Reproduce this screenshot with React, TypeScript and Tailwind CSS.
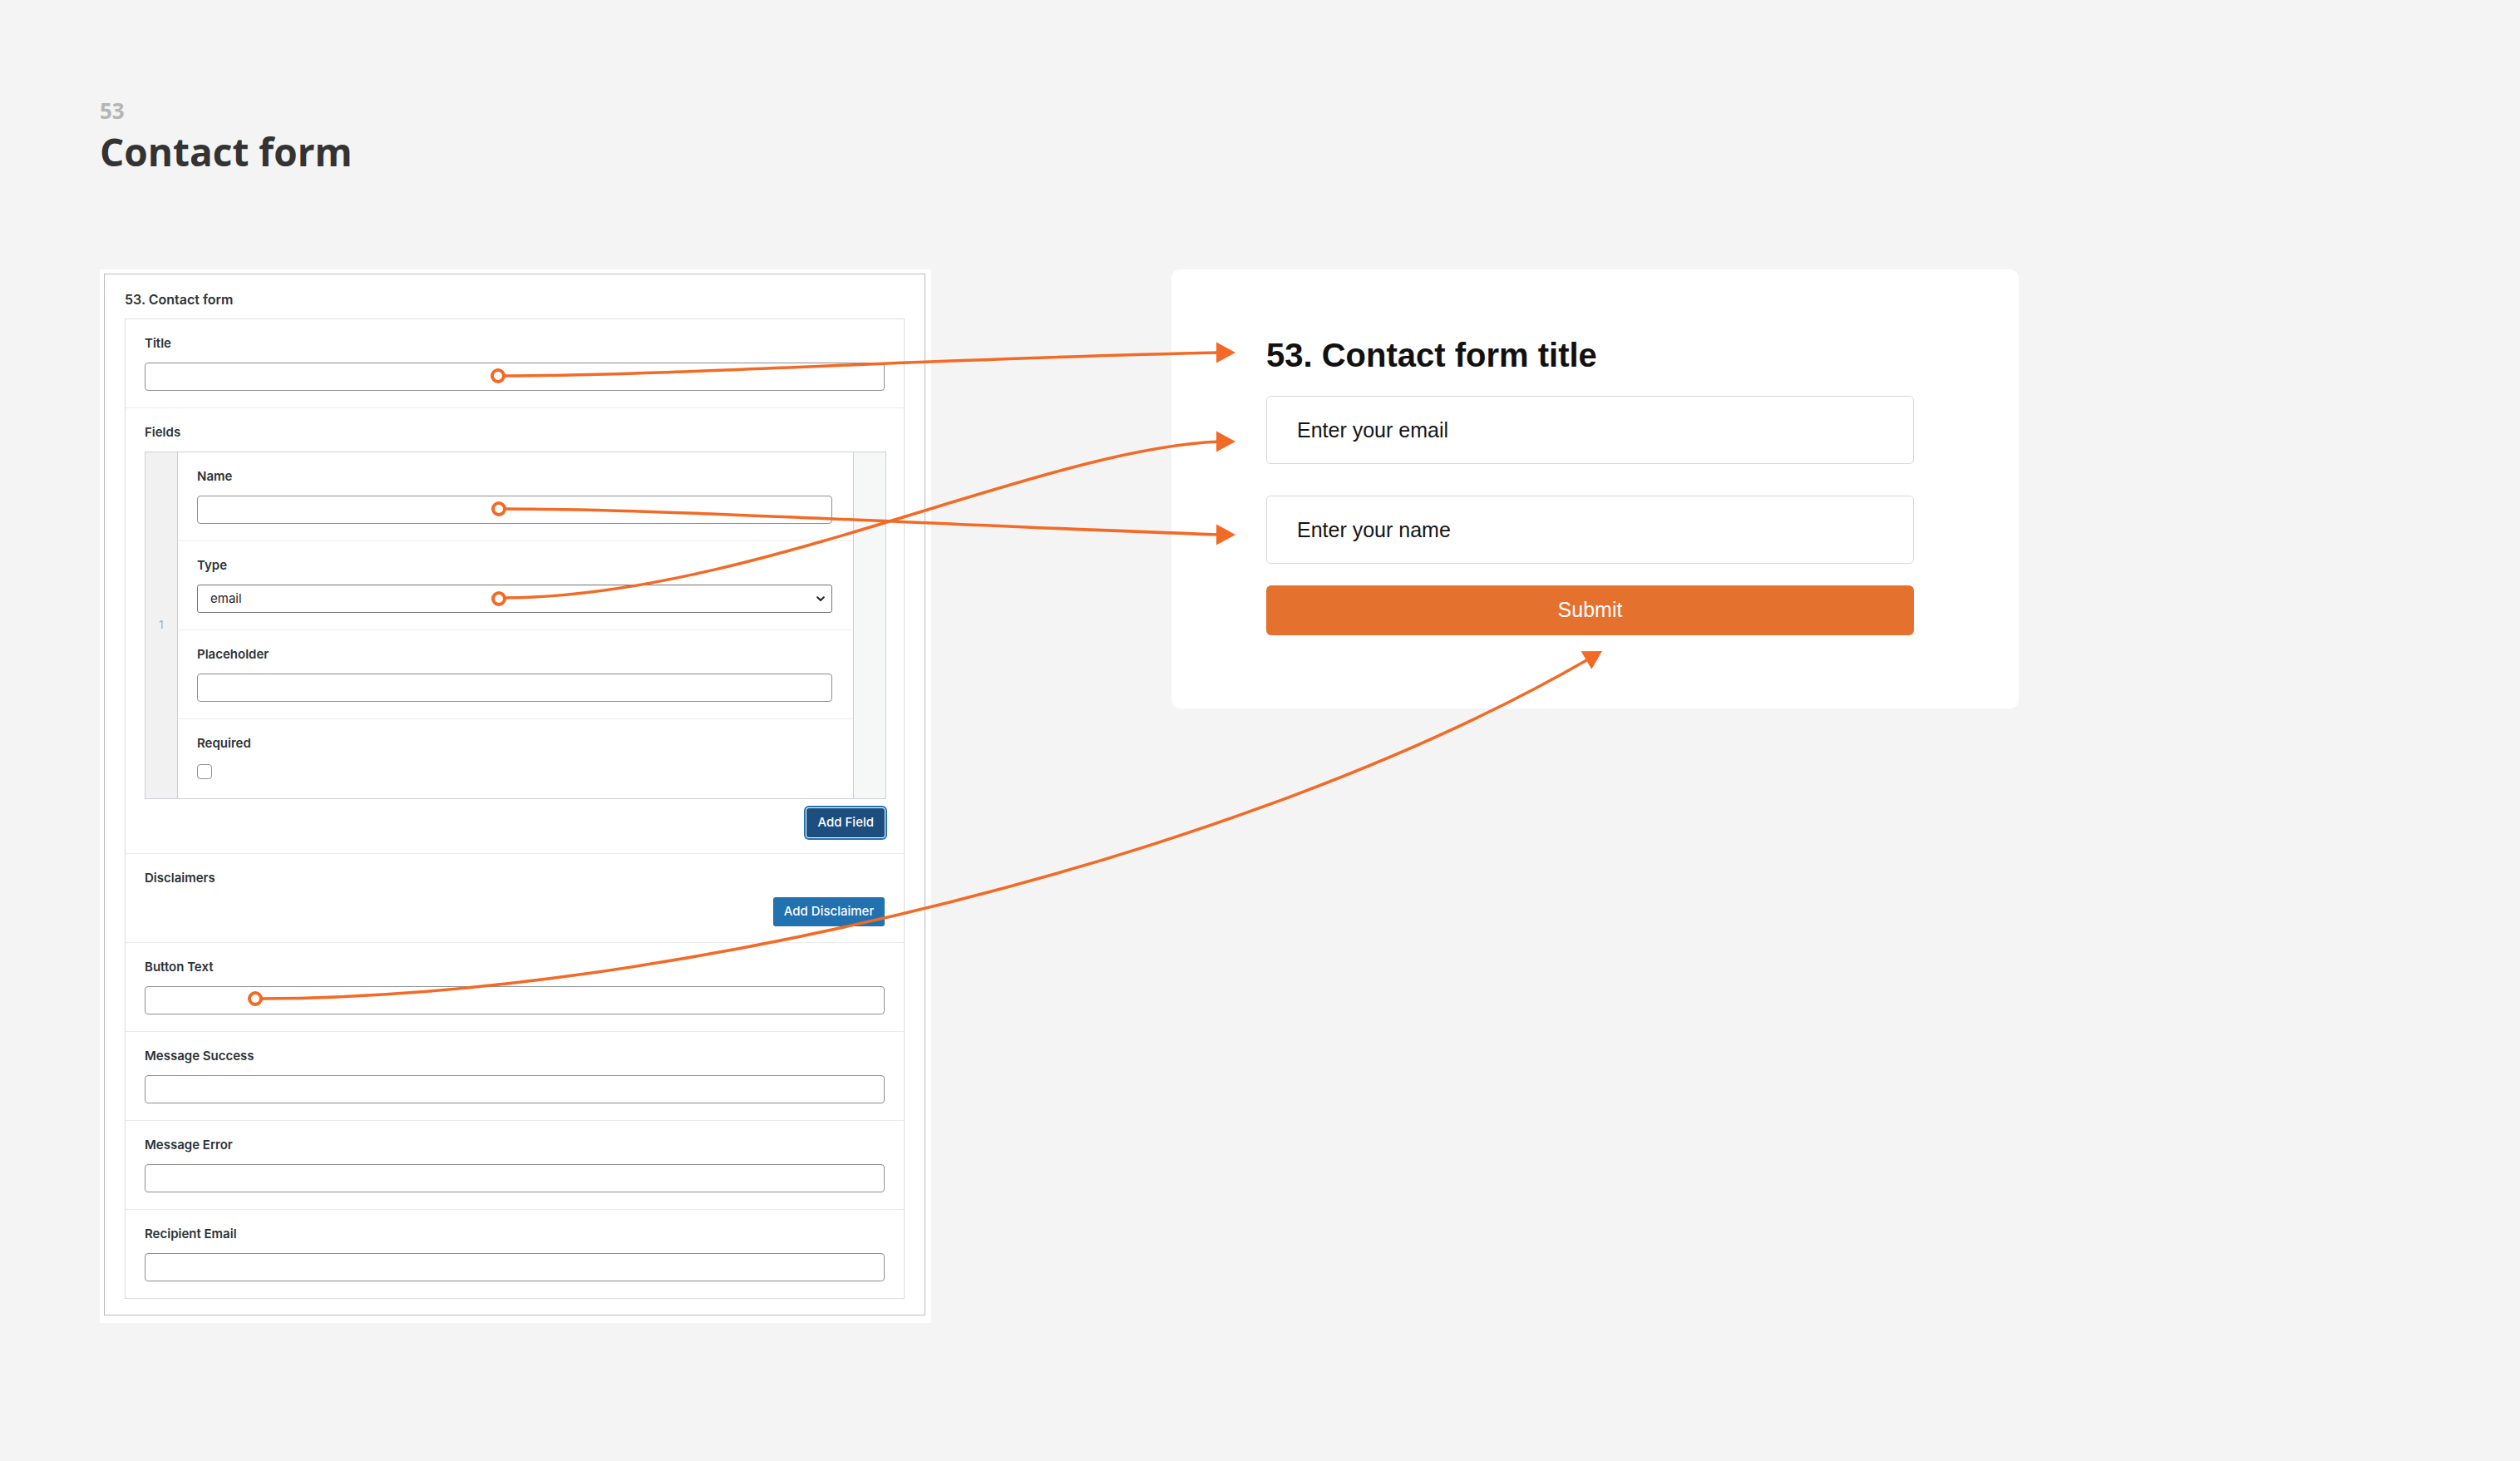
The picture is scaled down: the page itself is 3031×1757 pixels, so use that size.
import React from "react";

const ORANGE = "#f26a25";

// Admin panel field (label + control)
interface FieldProps {
  label: string;
  children: React.ReactNode;
  className?: string;
}

const Field: React.FC<FieldProps> = ({ label, children, className = "" }) => (
  <div className={`pt-[19px] pb-[20px] ${className}`}>
    <div className="mb-[13px] text-[15px] font-semibold leading-[20px] text-[#2c3338]">
      {label}
    </div>
    {children}
  </div>
);

const TextInput: React.FC = () => (
  <input
    type="text"
    className="block h-[34px] w-full rounded-[4px] border border-[#8c8f94] bg-white px-2 text-[14px] outline-none"
  />
);

const TypeSelect: React.FC = () => (
  <div className="flex h-[34px] w-full items-center justify-between rounded-[3px] border border-[#757575] bg-white pl-[15px] pr-[8px] text-[15px] text-[#1d2327]">
    <span>email</span>
    <svg width="10" height="7" viewBox="0 0 10 7" fill="none">
      <path d="M1.2 1.2L5 5L8.8 1.2" stroke="#1d2327" strokeWidth="2" strokeLinecap="round" strokeLinejoin="round" />
    </svg>
  </div>
);

const Repeater: React.FC = () => (
  <div className="flex w-[892px] border border-[#ccd0d4] bg-white">
    <div className="flex w-[39px] items-center justify-center border-r border-[#ccd0d4] bg-[#f1f1f2] text-[13px] text-[#a7aaad]">
      1
    </div>
    <div className="flex-1 divide-y divide-[#ececec]">
      <Field label="Name" className="pl-[23px] pr-[25px]">
        <TextInput />
      </Field>
      <Field label="Type" className="pl-[23px] pr-[25px]">
        <TypeSelect />
      </Field>
      <Field label="Placeholder" className="pl-[23px] pr-[25px]">
        <TextInput />
      </Field>
      <div className="pl-[23px] pr-[25px] pt-[19px] pb-[23px]">
        <div className="mb-[15px] text-[15px] font-semibold leading-[20px] text-[#2c3338]">
          Required
        </div>
        <div className="h-[18px] w-[18px] rounded-[4px] border border-[#8c8f94] bg-white" />
      </div>
    </div>
    <div className="w-[39px] border-l border-[#ccd0d4] bg-[#f6f7f7]" />
  </div>
);

const AdminPanel: React.FC = () => (
  <div className="w-[1000px] bg-white pt-[5px] pl-[5px] pr-[7px] pb-[9px] font-['Inter',sans-serif]">
    <div className="border border-[#b9babc] px-[24px] pt-[20px] pb-[19px]">
      <div className="mb-[13px] text-[16px] font-semibold leading-[20px] text-[#2c3338]">
        53. Contact form
      </div>
      <div className="divide-y divide-[#ececec] border border-[#dcdcde]">
        <Field label="Title" className="px-[23px]">
          <TextInput />
        </Field>
        <div className="px-[23px] pt-[19px] pb-[19px]">
          <div className="mb-[13px] text-[15px] font-semibold leading-[20px] text-[#2c3338]">
            Fields
          </div>
          <Repeater />
          <div className="mt-[11px] flex justify-end">
            <button className="h-[35px] rounded-[3px] bg-[#1c4f80] px-[13px] text-[15px] font-medium text-white shadow-[0_0_0_1px_#fff,0_0_0_3px_#2271b1]">
              Add Field
            </button>
          </div>
        </div>
        <div className="px-[23px] pt-[19px] pb-[19px]">
          <div className="mb-[13px] text-[15px] font-semibold leading-[20px] text-[#2c3338]">
            Disclaimers
          </div>
          <div className="flex justify-end">
            <button className="h-[35px] w-[134px] rounded-[3px] bg-[#2271b1] text-[15px] font-medium text-white">
              Add Disclaimer
            </button>
          </div>
        </div>
        <Field label="Button Text" className="px-[23px]">
          <TextInput />
        </Field>
        <Field label="Message Success" className="px-[23px]">
          <TextInput />
        </Field>
        <Field label="Message Error" className="px-[23px]">
          <TextInput />
        </Field>
        <Field label="Recipient Email" className="px-[23px]">
          <TextInput />
        </Field>
      </div>
    </div>
  </div>
);

const PreviewCard: React.FC = () => (
  <div className="h-[528px] w-[1019px] rounded-[10px] bg-white pl-[114px] pt-[80px] font-['Liberation_Sans',Arial,sans-serif]">
    <div className="w-[779px]">
      <h2 className="text-[40px] font-bold leading-[46px] text-[#111]">53. Contact form title</h2>
      <input
        type="email"
        placeholder="Enter your email"
        className="mt-[26px] block h-[82px] w-full rounded-[5px] border border-[#d9d9d9] bg-white pl-[36px] text-[25px] text-[#111] outline-none placeholder:text-[#151515]"
      />
      <input
        type="text"
        placeholder="Enter your name"
        className="mt-[38px] block h-[82px] w-full rounded-[5px] border border-[#d9d9d9] bg-white pl-[36px] text-[25px] text-[#111] outline-none placeholder:text-[#151515]"
      />
      <button className="mt-[26px] block h-[60px] w-full rounded-[6px] bg-[#e5712f] text-[25px] text-white">
        Submit
      </button>
    </div>
  </div>
);

// Orange connector arrows drawn over both panels
const Connectors: React.FC = () => {
  const paths = [
    "M 605 452 C 800 452, 1100 432, 1466 424",
    "M 605 612 C 800 612, 1100 630, 1466 643",
    "M 605 719 C 900 719, 1250 540, 1466 531",
    "M 312 1201 C 800 1200, 1500 1030, 1910 793",
  ];
  const heads = [
    "1463,411.5 1463,436.5 1486,424",
    "1463,630.5 1463,655.5 1486,643",
    "1463,518.5 1463,543.5 1486,531",
    "1901.7,783.2 1914.3,804.8 1927,783",
  ];
  const dots = [
    [599, 452],
    [600, 612],
    [600, 720],
    [307, 1201],
  ];
  return (
    <svg
      className="pointer-events-none absolute left-0 top-0"
      width={3031}
      height={1757}
      viewBox="0 0 3031 1757"
      fill="none"
    >
      {paths.map((d, i) => (
        <path key={i} d={d} stroke={ORANGE} strokeWidth={3.5} strokeLinecap="round" fill="none" />
      ))}
      {heads.map((p, i) => (
        <polygon key={i} points={p} fill={ORANGE} />
      ))}
      {dots.map(([cx, cy], i) => (
        <circle key={i} cx={cx} cy={cy} r={7} fill="#fff" stroke={ORANGE} strokeWidth={4} />
      ))}
    </svg>
  );
};

export default function App() {
  return (
    <div className="relative min-h-screen w-full overflow-hidden bg-[#f4f4f4]">
      <div className="pl-[120px] pt-[120px]">
        <div className="font-['Open_Sans',sans-serif]">
          <div className="text-[26px] font-bold leading-none text-[#b5b5b5]">53</div>
          <h1 className="mt-[13px] text-[46px] font-bold leading-none text-[#333]">Contact form</h1>
        </div>
        <div className="mt-[119px] flex items-start">
          <AdminPanel />
          <div className="ml-[289px]">
            <PreviewCard />
          </div>
        </div>
      </div>
      <Connectors />
    </div>
  );
}
